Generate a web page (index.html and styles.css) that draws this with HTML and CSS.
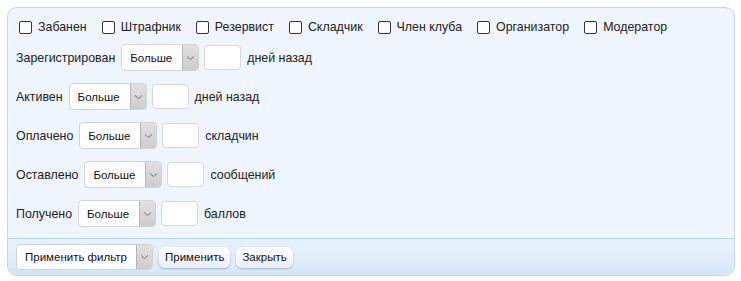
FILE: index.html
```html
<!DOCTYPE html>
<html lang="ru">

<head>
    <meta charset="UTF-8">
    <title>Фильтр пользователей</title>
    <link rel="stylesheet" href="styles.css">
</head>

<body>
    <div class="filter-panel">
        <div class="filter-body">
            <div class="check-row">
                <label class="check"><span class="box"></span>Забанен</label>
                <label class="check"><span class="box"></span>Штрафник</label>
                <label class="check"><span class="box"></span>Резервист</label>
                <label class="check"><span class="box"></span>Складчик</label>
                <label class="check"><span class="box"></span>Член клуба</label>
                <label class="check"><span class="box"></span>Организатор</label>
                <label class="check"><span class="box"></span>Модератор</label>
            </div>

            <div class="filter-row">
                <span class="row-label">Зарегистрирован</span>
                <div class="fake-select"><span class="value">Больше</span><span class="arrow"><svg width="9" height="6" viewBox="0 0 9 6"><path d="M1 1.5l3.5 3 3.5-3" fill="none" stroke="#777" stroke-width="1"/></svg></span></div>
                <span class="num-input"></span>
                <span class="row-unit">дней назад</span>
            </div>

            <div class="filter-row">
                <span class="row-label">Активен</span>
                <div class="fake-select"><span class="value">Больше</span><span class="arrow"><svg width="9" height="6" viewBox="0 0 9 6"><path d="M1 1.5l3.5 3 3.5-3" fill="none" stroke="#777" stroke-width="1"/></svg></span></div>
                <span class="num-input"></span>
                <span class="row-unit">дней назад</span>
            </div>

            <div class="filter-row">
                <span class="row-label">Оплачено</span>
                <div class="fake-select"><span class="value">Больше</span><span class="arrow"><svg width="9" height="6" viewBox="0 0 9 6"><path d="M1 1.5l3.5 3 3.5-3" fill="none" stroke="#777" stroke-width="1"/></svg></span></div>
                <span class="num-input"></span>
                <span class="row-unit">складчин</span>
            </div>

            <div class="filter-row">
                <span class="row-label">Оставлено</span>
                <div class="fake-select"><span class="value">Больше</span><span class="arrow"><svg width="9" height="6" viewBox="0 0 9 6"><path d="M1 1.5l3.5 3 3.5-3" fill="none" stroke="#777" stroke-width="1"/></svg></span></div>
                <span class="num-input"></span>
                <span class="row-unit">сообщений</span>
            </div>

            <div class="filter-row">
                <span class="row-label">Получено</span>
                <div class="fake-select"><span class="value">Больше</span><span class="arrow"><svg width="9" height="6" viewBox="0 0 9 6"><path d="M1 1.5l3.5 3 3.5-3" fill="none" stroke="#777" stroke-width="1"/></svg></span></div>
                <span class="num-input"></span>
                <span class="row-unit">баллов</span>
            </div>
        </div>

        <div class="filter-footer">
            <div class="fake-select wide"><span class="value">Применить фильтр</span><span class="arrow"><svg width="9" height="6" viewBox="0 0 9 6"><path d="M1 1.5l3.5 3 3.5-3" fill="none" stroke="#777" stroke-width="1"/></svg></span></div>
            <button type="button" class="btn">Применить</button>
            <button type="button" class="btn">Закрыть</button>
        </div>
    </div>
</body>

</html>
```

FILE: styles.css
```css
body {
    margin: 0;
    padding: 7px 6px 5px 7px;
    font-family: "Liberation Sans", Arial, sans-serif;
    font-size: 12.4px;
    color: #222;
    background-color: #fff;
}

.filter-panel {
    width: 726px;
    height: 267px;
    border: 1px solid #c6d6e6;
    border-radius: 10px;
    background-color: #eef5fc;
    display: flex;
    flex-direction: column;
    overflow: hidden;
}

.filter-body {
    flex: 1;
    padding: 11px 8px 0 8px;
    display: flex;
    flex-direction: column;
    gap: 12px;
}

/* checkboxes */
.check-row {
    display: flex;
    align-items: center;
    height: 16px;
    margin-bottom: -3px;
}

.check {
    display: flex;
    align-items: center;
    gap: 6px;
    margin-left: 3px;
    margin-right: 12px;
}

.check .box {
    width: 11px;
    height: 11px;
    border: 1px solid #333;
    border-radius: 2px;
    background-color: #fff;
}

/* filter rows */
.filter-row {
    display: flex;
    align-items: center;
    height: 27px;
}

.row-label {
    margin-right: 6px;
}

.row-unit {
    margin-left: 6px;
}

.fake-select {
    display: flex;
    width: 76px;
    height: 25px;
    border: 1px solid #d3d3d3;
    border-radius: 4px;
    background-color: #fff;
    overflow: hidden;
    font-size: 11.5px;
    color: #111;
}

.fake-select .value {
    flex: 1;
    display: flex;
    align-items: center;
    padding-left: 8px;
}

.fake-select .arrow {
    width: 15px;
    display: flex;
    align-items: center;
    justify-content: center;
    border-left: 1px solid #b5b5b5;
    background: linear-gradient(#e0e0e0, #cdcdcd);
}

.num-input {
    width: 35px;
    height: 23px;
    margin-left: 5px;
    border: 1px solid #d8d8d8;
    border-radius: 4px;
    background-color: #fff;
}

/* footer */
.filter-footer {
    height: 36px;
    border-top: 1px solid #bcd2e6;
    background: linear-gradient(#e5f0fb, #e1eefa 50%, #d3e7f8);
    display: flex;
    align-items: center;
    padding: 0 8px;
    gap: 6px;
}

.fake-select.wide {
    width: 135px;
    height: 24px;
}

.btn {
    height: 21px;
    padding: 0 6px;
    font-family: "Liberation Sans", Arial, sans-serif;
    font-size: 11.5px;
    color: #111;
    border: none;
    border-radius: 6px;
    background: linear-gradient(#ffffff, #e9eef5);
    box-shadow: 0 1px 2px rgba(60, 80, 110, 0.35);
    cursor: pointer;
}
```
